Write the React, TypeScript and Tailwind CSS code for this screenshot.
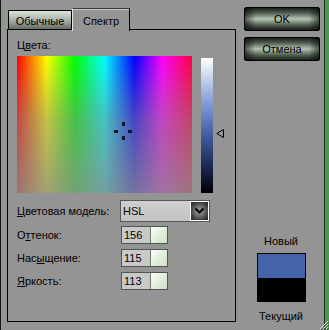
import React from "react";

const btnBg =
  "bg-[image:linear-gradient(to_right,rgba(0,0,0,0.55),rgba(0,0,0,0)_14%,rgba(0,0,0,0)_86%,rgba(0,0,0,0.55)),linear-gradient(to_bottom,#1a201a,#505c50_22%,#b4c4b4_50%,#505c50_78%,#1a201a)]";

function Btn({ children }: { children: React.ReactNode }) {
  return (
    <div
      className={`w-[76px] h-[24px] border border-black rounded-[2px] flex items-center justify-center text-black ${btnBg}`}
    >
      {children}
    </div>
  );
}

function NumInput({ value }: { value: string }) {
  return (
    <div className="ml-px w-[47px] h-[18px] border border-[#4e584e] flex">
      <div className="flex-1 bg-[#c9c9c9] pl-[2px] flex items-center">{value}</div>
      <div className="w-[17px] border-l border-[#6e7e6e] bg-[image:linear-gradient(135deg,#ffffff,#e2efdc_50%,#cfe0c8)]" />
    </div>
  );
}

export default function App() {
  return (
    <div className="w-[329px] h-[330px] bg-[#949494] flex font-['Liberation_Sans',Arial,sans-serif] text-[11px] leading-[13px] text-black relative overflow-hidden">
      <div className="w-px bg-[#0e1a0e]" />
      {/* left column */}
      <div className="w-[235px] pl-[6px] pt-[7px] pb-[8px] flex flex-col">
        <div className="flex items-end h-[23px]">
          <div className="ml-px w-[64px] h-[20px] border border-black border-b-0 flex items-center justify-center pt-[2px] bg-[image:linear-gradient(to_bottom,#dde5dd,#a6aea6_50%,#5c645c)]">
            Обычные
          </div>
          <div className="relative z-10 w-[58px] h-[23px] -mb-px border-t border-r border-l border-t-[#3a3a3a] border-r-black border-l-[#e6e6e6] bg-[#949494] shadow-[inset_0_1px_0_#c8c8c8] flex items-center justify-center pt-[2px]">
            Спектр
          </div>
        </div>
        <div className="flex-1 -mt-px border border-black flex flex-col pl-[9px] pt-[9px]">
          <div>
            Ц<u>в</u>ета:
          </div>
          <div className="flex mt-[4px]">
            <div className="relative w-[175px] h-[137px] bg-[image:linear-gradient(to_bottom,rgba(136,136,136,0),rgba(136,136,136,0.5)_45%,rgba(140,140,140,0.82)),linear-gradient(to_right,#ff0000,#ffff00_17%,#00ff00_33%,#00ffff_50%,#0000ff_67%,#ff00ff_83%,#ff0040)]">
              <div className="absolute left-[105px] top-[66px] w-[3px] h-[4px] bg-[#101828]" />
              <div className="absolute left-[97px] top-[74px] w-[4px] h-[3px] bg-[#101828]" />
              <div className="absolute left-[111px] top-[74px] w-[4px] h-[3px] bg-[#101828]" />
              <div className="absolute left-[105px] top-[80px] w-[3px] h-[4px] bg-[#101828]" />
            </div>
            <div className="ml-[9px] mt-[2px] w-[12px] h-[135px] bg-[image:linear-gradient(to_bottom,#ffffff,#8ea4da_30%,#4563a8_55%,#1c2850_80%,#000000)]" />
            <svg className="ml-[3px] mt-[73px]" width="8" height="9" viewBox="0 0 8 9">
              <path d="M7.5 0.5 L0.8 4.5 L7.5 8.5 Z" fill="none" stroke="#000" strokeWidth="1" />
            </svg>
          </div>
          <div className="flex items-center mt-[7px] h-[22px]">
            <div className="w-[103px]">
              <u>Ц</u>ветовая модель:
            </div>
            <div className="w-[90px] h-[22px] border border-[#525a52] bg-[image:linear-gradient(to_bottom,#cfcfcf,#c2c2c2)] flex items-center justify-between pl-[2px]">
              <span>HSL</span>
              <div className="w-[19px] h-[20px] border border-white bg-[image:radial-gradient(circle,#a8a8a8,#3a3a3a_75%,#1e1e1e)] flex items-center justify-center">
                <svg width="11" height="8" viewBox="0 0 11 8">
                  <path d="M1.5 1.5 L5.5 5.5 L9.5 1.5" fill="none" stroke="#000" strokeWidth="2.2" />
                </svg>
              </div>
            </div>
          </div>
          <div className="flex items-center mt-[4px] h-[18px]">
            <div className="w-[103px]">
              О<u>т</u>тенок:
            </div>
            <NumInput value="156" />
          </div>
          <div className="flex items-center mt-[5px] h-[18px]">
            <div className="w-[103px]">
              Нас<u>ы</u>щение:
            </div>
            <NumInput value="115" />
          </div>
          <div className="flex items-center mt-[5px] h-[18px]">
            <div className="w-[103px]">
              <u>Я</u>ркость:
            </div>
            <NumInput value="113" />
          </div>
        </div>
      </div>
      {/* right column */}
      <div className="flex-1 flex flex-col pt-[7px] pb-[7px]">
        <div className="pl-[8px] flex flex-col gap-[6px]">
          <Btn>OK</Btn>
          <Btn>Отмена</Btn>
        </div>
        <div className="mt-auto flex flex-col items-center pl-[2px]">
          <div>Новый</div>
          <div className="mt-[5px] w-[49px] h-[49px] border border-black flex flex-col">
            <div className="flex-1 bg-[#4563a8]" />
            <div className="flex-1 bg-black" />
          </div>
          <div className="mt-[8px]">Текущий</div>
        </div>
      </div>
      <div className="w-px bg-[#1e2e1e]" />
      <div className="w-[4px] bg-[#4c9a4c]" />
      <svg className="absolute right-0 bottom-0" width="11" height="11" viewBox="0 0 11 11">
        <path d="M10 2 L2 10 M10 5 L5 10 M10 8 L8 10" stroke="#e8e8e8" strokeWidth="1" />
        <path d="M11 3 L3 11 M11 6 L6 11 M11 9 L9 11" stroke="#505050" strokeWidth="1" />
      </svg>
    </div>
  );
}
